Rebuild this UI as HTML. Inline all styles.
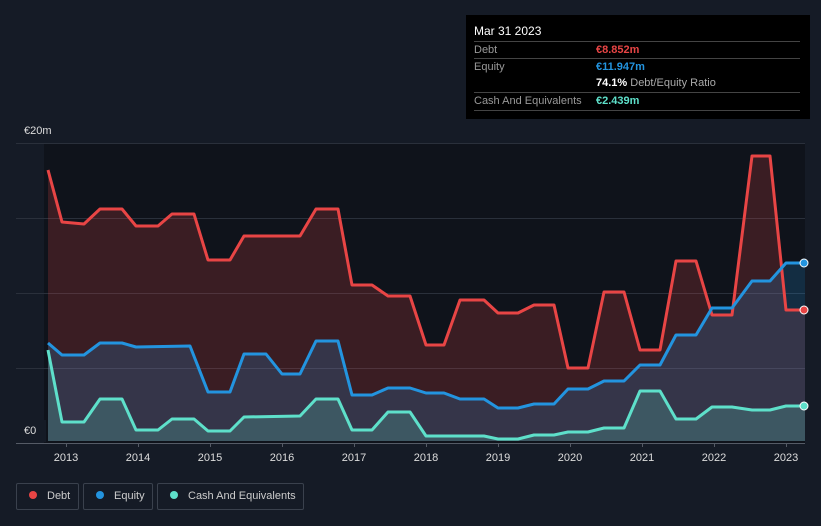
<!DOCTYPE html>
<html><head><meta charset="utf-8"><style>
html,body{margin:0;width:821px;height:526px;overflow:hidden}
body{background:#151b26;font-family:"Liberation Sans",sans-serif;position:relative}
.tip{position:absolute;left:466px;top:15px;width:344px;height:104px;background:#000;color:#fff;font-size:11px}
.row{position:absolute;left:8px;width:326px;border-top:1px solid #444;height:17px;line-height:17px}
.lab{color:#999}
.v{position:absolute;left:122px;top:0;font-weight:bold}
.leg{position:absolute;top:483px;height:27px;border:1px solid #3a414d;border-radius:2px;color:#ccc;font-size:11px;line-height:25px;white-space:nowrap;box-sizing:border-box}
.dot{display:inline-block;width:8px;height:8px;border-radius:50%;margin:0 10px 0 12px;vertical-align:0}
.ax{position:absolute;color:#ddd;font-size:11px}
</style></head><body>
<svg width="821" height="526" style="position:absolute;left:0;top:0">
<rect x="44" y="143" width="761" height="300" fill="#0f131b"/>
<g stroke="#2a303b" stroke-width="1">
<line x1="16" y1="143.5" x2="805" y2="143.5"/><line x1="16" y1="218.5" x2="805" y2="218.5"/><line x1="16" y1="293.5" x2="805" y2="293.5"/><line x1="16" y1="368.5" x2="805" y2="368.5"/>
</g>
<path d="M48,170L62,222L84,224L100,209L122,209L136,226L158,226L172,214L194,214L208,260L230,260L244,236L300,236L316,209L338,209L352,285L372,285L388,296L410,296L426,345L444,345L460,300L484,300L498,313L518,313L534,305L554,305L568,368L588,368L604,292L624,292L640,350L660,350L676,261L696,261L712,315L732,315L752,156L770,156L786,310L805,310L805,441L48,441Z" fill="#e84545" fill-opacity="0.2"/>
<path d="M48,343L62,355L84,355L100,343L122,343L136,347L190,346L208,392L230,392L244,354L266,354L282,374L300,374L316,341L338,341L352,395L372,395L388,388L410,388L426,393L444,393L460,399L484,399L498,408L518,408L534,404L554,404L568,389L588,389L604,381L624,381L640,365L660,365L676,335L696,335L712,308L732,308L752,281L770,281L786,263L805,263L805,441L48,441Z" fill="#2394df" fill-opacity="0.2"/>
<path d="M48,350L62,422L84,422L100,399L122,399L136,430L158,430L172,419L194,419L208,431L230,431L244,417L300,416L316,399L338,399L352,430L372,430L388,412L410,412L426,436L484,436L498,439L518,439L534,435L554,435L568,432L588,432L604,428L624,428L640,391L660,391L676,419L696,419L712,407L732,407L752,410L770,410L786,406L805,406L805,441L48,441Z" fill="#5ee0ca" fill-opacity="0.2"/>
<g fill="none" stroke-width="3" stroke-linejoin="round">
<path stroke="#e84545" d="M48,170L62,222L84,224L100,209L122,209L136,226L158,226L172,214L194,214L208,260L230,260L244,236L300,236L316,209L338,209L352,285L372,285L388,296L410,296L426,345L444,345L460,300L484,300L498,313L518,313L534,305L554,305L568,368L588,368L604,292L624,292L640,350L660,350L676,261L696,261L712,315L732,315L752,156L770,156L786,310L805,310"/>
<path stroke="#2394df" d="M48,343L62,355L84,355L100,343L122,343L136,347L190,346L208,392L230,392L244,354L266,354L282,374L300,374L316,341L338,341L352,395L372,395L388,388L410,388L426,393L444,393L460,399L484,399L498,408L518,408L534,404L554,404L568,389L588,389L604,381L624,381L640,365L660,365L676,335L696,335L712,308L732,308L752,281L770,281L786,263L805,263"/>
<path stroke="#5ee0ca" d="M48,350L62,422L84,422L100,399L122,399L136,430L158,430L172,419L194,419L208,431L230,431L244,417L300,416L316,399L338,399L352,430L372,430L388,412L410,412L426,436L484,436L498,439L518,439L534,435L554,435L568,432L588,432L604,428L624,428L640,391L660,391L676,419L696,419L712,407L732,407L752,410L770,410L786,406L805,406"/>
</g>
<circle cx="804" cy="310" r="4" fill="#e84545" stroke="#fff" stroke-width="1"/>
<circle cx="804" cy="263" r="4" fill="#2394df" stroke="#fff" stroke-width="1"/>
<circle cx="804" cy="406" r="4" fill="#5ee0ca" stroke="#fff" stroke-width="1"/>
<rect x="16" y="420" width="30" height="22" fill="#151b26"/>
<line x1="16" y1="443.5" x2="805" y2="443.5" stroke="#555b66"/>
<g stroke="#555b66"><line x1="66.5" y1="443" x2="66.5" y2="447"/><line x1="138.5" y1="443" x2="138.5" y2="447"/><line x1="210.5" y1="443" x2="210.5" y2="447"/><line x1="282.5" y1="443" x2="282.5" y2="447"/><line x1="354.5" y1="443" x2="354.5" y2="447"/><line x1="426.5" y1="443" x2="426.5" y2="447"/><line x1="498.5" y1="443" x2="498.5" y2="447"/><line x1="570.5" y1="443" x2="570.5" y2="447"/><line x1="642.5" y1="443" x2="642.5" y2="447"/><line x1="714.5" y1="443" x2="714.5" y2="447"/><line x1="786.5" y1="443" x2="786.5" y2="447"/></g>
<g fill="#ddd" font-size="11" font-family="Liberation Sans" text-anchor="middle">
<text x="66" y="461">2013</text><text x="138" y="461">2014</text><text x="210" y="461">2015</text><text x="282" y="461">2016</text><text x="354" y="461">2017</text><text x="426" y="461">2018</text><text x="498" y="461">2019</text><text x="570" y="461">2020</text><text x="642" y="461">2021</text><text x="714" y="461">2022</text><text x="786" y="461">2023</text>
</g>
</svg>
<div class="ax" style="left:24px;top:125px">€20m</div>
<div class="ax" style="left:24px;top:425px">€0</div>
<div class="tip">
<div style="position:absolute;left:8px;top:9px;font-size:12px">Mar 31 2023</div>
<div class="row" style="top:26px"><span class="lab">Debt</span><span class="v" style="color:#e84545">€8.852m</span></div>
<div class="row" style="top:43px"><span class="lab">Equity</span><span class="v" style="color:#2394df">€11.947m</span></div>
<div class="row" style="top:60px;border-top:none"><span class="v" style="color:#fff">74.1% <span style="font-weight:normal;color:#aaa">Debt/Equity Ratio</span></span></div>
<div class="row" style="top:77px"><span class="lab">Cash And Equivalents</span><span class="v" style="color:#5ee0ca">€2.439m</span></div>
<div class="row" style="top:95px;height:0"></div>
</div>
<div class="leg" style="left:16px;width:63px"><span class="dot" style="background:#e84545"></span>Debt</div>
<div class="leg" style="left:83px;width:70px"><span class="dot" style="background:#2394df"></span>Equity</div>
<div class="leg" style="left:157px;width:147px"><span class="dot" style="background:#5ee0ca"></span>Cash And Equivalents</div>
</body></html>
